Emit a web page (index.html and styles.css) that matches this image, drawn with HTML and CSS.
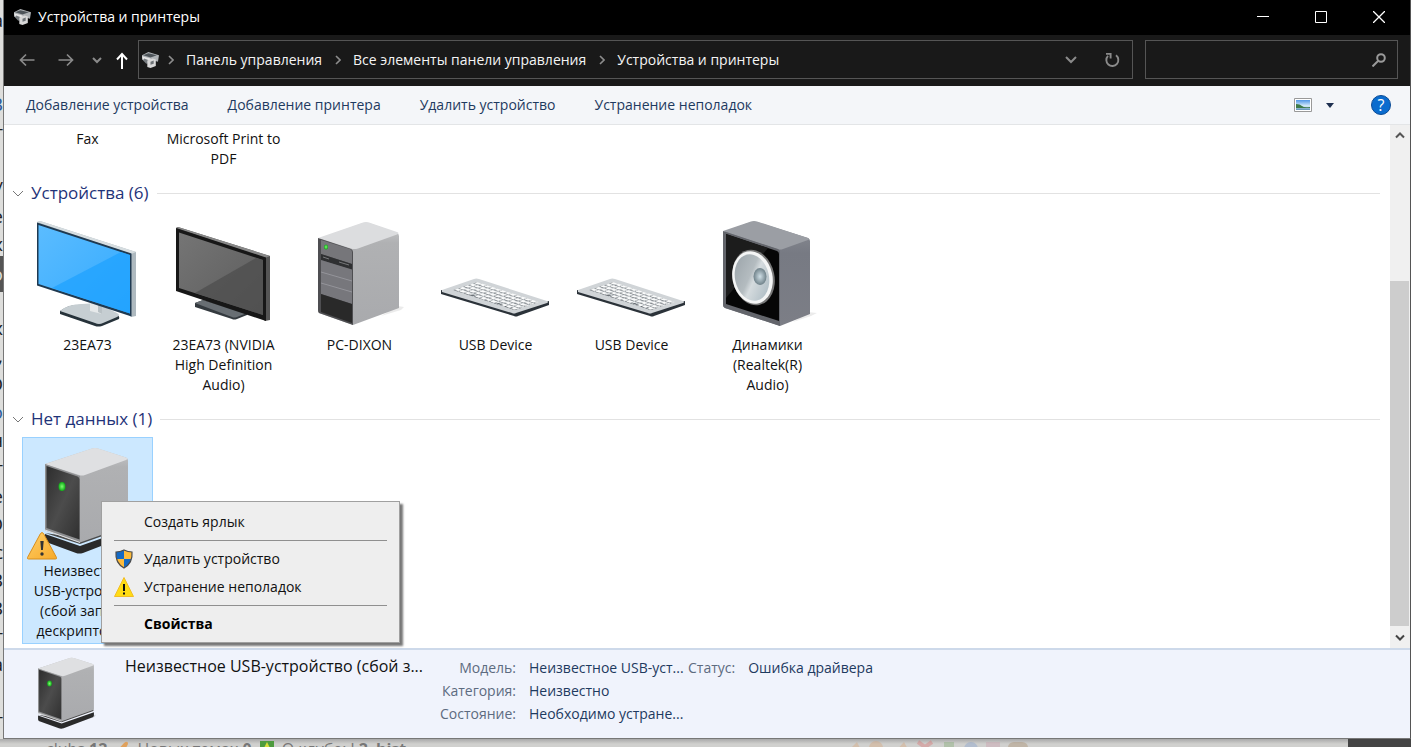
FILE: index.html
```html
<!DOCTYPE html>
<html lang="ru">
<head>
<meta charset="utf-8">
<title>Устройства и принтеры</title>
<link rel="stylesheet" href="styles.css">
</head>
<body>
<svg class="defs" aria-hidden="true">
  <defs>
    <linearGradient id="gBlue" x1="0" y1="0" x2="1" y2="1"><stop offset="0" stop-color="#5bbcff"/><stop offset="1" stop-color="#33aaff"/></linearGradient>
    <linearGradient id="gGrey" x1="0" y1="0" x2="1" y2="1"><stop offset="0" stop-color="#757575"/><stop offset="1" stop-color="#5c5c5c"/></linearGradient>
    <linearGradient id="gSide" x1="0" y1="0" x2="0" y2="1"><stop offset="0" stop-color="#c9cacc"/><stop offset=".2" stop-color="#b0b1b3"/><stop offset="1" stop-color="#a9aaad"/></linearGradient>
    <linearGradient id="gFront" x1="0" y1="0" x2="1" y2="1"><stop offset="0" stop-color="#2d2d2d"/><stop offset=".5" stop-color="#4c4c4c"/><stop offset="1" stop-color="#303030"/></linearGradient>
    <linearGradient id="gSpk" x1="0" y1="0" x2="0" y2="1"><stop offset="0" stop-color="#8b8e95"/><stop offset=".3" stop-color="#777a83"/><stop offset="1" stop-color="#7c7e86"/></linearGradient>
    <linearGradient id="gCone" x1="0" y1="0" x2="1" y2="1"><stop offset="0" stop-color="#98a1a7"/><stop offset=".45" stop-color="#b4bcc0"/><stop offset=".55" stop-color="#d5dbde"/><stop offset="1" stop-color="#a3b4bd"/></linearGradient>
    <radialGradient id="gCap"><stop offset="0" stop-color="#cfdfe6"/><stop offset="1" stop-color="#6f8189"/></radialGradient>
    <radialGradient id="gLed"><stop offset="0" stop-color="#7dff6e"/><stop offset="1" stop-color="#0fa918"/></radialGradient>
    <linearGradient id="gWarn" x1="0" y1="0" x2="1" y2="1"><stop offset="0" stop-color="#ffd06a"/><stop offset="1" stop-color="#f7a928"/></linearGradient>
    <linearGradient id="gPic" x1="0" y1="0" x2="0" y2="1"><stop offset="0" stop-color="#4f96e6"/><stop offset=".6" stop-color="#d7ecfa"/><stop offset="1" stop-color="#5b8fb5"/></linearGradient>
    <symbol id="box" viewBox="44 447 88 107">
      <path d="M120 534l11-1-2 3-20 7z" fill="#000" opacity=".12"/>
      <path d="M45 534l35 12 48-17v5l-1 2-44 17q-4 1-7 0l-30-11-1-2z" fill="#2a2a2a"/>
      <path d="M45 533l35 11 48-17-4-3-44 14z" fill="#4b4b4b"/>
      <path d="M45 464l47-15.500q3-1 6 0l28 9q2 1 2 3v65l-48 17-35-12z" fill="url(#gSide)"/>
      <path d="M45 464l47-15.500q3-1 6 0l28 9q3 1 0 2.500l-41 15q-3 1-6 0z" fill="#dfe0e2"/>
      <path d="M45 464l35 12v66l-35-12z" fill="#8e8f91"/>
      <path d="M46.500 466l31 10.500q2 1 2 3v60l-33-11.500z" fill="url(#gFront)"/>
      <path d="M45 530l35 12.500" stroke="#e1e1e1"/>
      <ellipse cx="62" cy="486.500" rx="3.500" ry="4.500" fill="url(#gLed)"/>
    </symbol>
    <symbol id="keyboard" viewBox="-1 -1 129 123">
      <path d="M104 93l10-3-6 5-6 1z" fill="#000" opacity=".08"/>
      <path d="M9 77v4l73 22q2 1 4 0l31-11v-4l-34 8z" fill="#2b3239"/>
      <path d="M10 77l32-11q2-1 5 0l68 22q2 1 0 2l-31 10q-2 1-4 0L10 79z" fill="#d0d4d7"/>
      <g transform="matrix(.74 .24 -.33 .11 43 66)" fill="none">
        <path d="M8 19H91M8 34H91M8 49H91M8 64H91M8 79H91" stroke="#6a7076" stroke-width="9" stroke-dasharray="5.500 1.300"/>
        <path d="M8 16H91M8 31H91M8 46H91M8 61H91M8 76H30M36 76H65M71 76H91" stroke="#fafbfb" stroke-width="10" stroke-dasharray="5.300 1.500"/>
      </g>
    </symbol>
    <symbol id="printer" viewBox="0 0 16 16">
      <path d="M0 4l6-3 10 3-1 6-4-1-7 1-4-2z" fill="#aeb2b5"/>
      <path d="M1 4l5-2 8 2-6 2z" fill="#4c5358"/>
      <path d="M0 5l8 2v3L1 8z" fill="#e6e6e6"/>
      <path d="M2 7l5 2 1 2-4 1-3-3z" fill="#777c80"/>
      <path d="M5 9l5-2 3 1v6l-5 2-3-1z" fill="#d8d8d8"/>
      <path d="M8 10l3-1v3l-3 1z" fill="#6d7276"/>
    </symbol>
  </defs>
</svg>

<div class="desk">
  <div class="desk-left" aria-hidden="true">
    <span>а</span><span></span><span></span><span class="blue">В</span><span>т</span><span></span><span>/</span><span>е</span><span>х</span><span class="mark">о</span><span></span><span>х</span><span>,</span><span>О</span><span class="blue">о</span><span>н</span><span>т</span><span>е</span><span>О</span><span>с</span><span>В</span><span>В</span><span>т</span><span>а</span><span></span><span>т</span>
  </div>

  <div class="window">
    <header class="titlebar">
      <svg class="app-icon"><use href="#printer"/></svg>
      <h1>Устройства и принтеры</h1>
      <div class="caption-buttons">
        <button aria-label="Свернуть"><svg width="12" height="12"><path d="M0 5.500h12" stroke="#fff"/></svg></button>
        <button aria-label="Развернуть"><svg width="12" height="12"><path d="M.5.500h11v11H.5z" stroke="#fff" fill="none"/></svg></button>
        <button aria-label="Закрыть"><svg width="12" height="12"><path d="M0 0l12 12M12 0L0 12" stroke="#fff" stroke-width="1.300"/></svg></button>
      </div>
    </header>

    <nav class="navbar" aria-label="Навигация">
      <div class="nav-buttons">
        <button aria-label="Назад"><svg width="16" height="14"><path d="M15.500 7H1.500M7 1.500L1.500 7 7 12.500" stroke="#8a8a8a" stroke-width="1.700" fill="none"/></svg></button>
        <button aria-label="Вперёд"><svg width="16" height="14"><path d="M.5 7h14M9 1.500L14.500 7 9 12.500" stroke="#8a8a8a" stroke-width="1.700" fill="none"/></svg></button>
        <button aria-label="Последние расположения"><svg width="10" height="14"><path d="M1 5l4 4 4-4" stroke="#8a8a8a" stroke-width="2" fill="none"/></svg></button>
        <button aria-label="Вверх"><svg width="12" height="18"><path d="M6 18V3M1 8.500L6 3l5 5.500" stroke="#fff" stroke-width="2" fill="none"/></svg></button>
      </div>
      <div class="address">
        <svg class="app-icon"><use href="#printer"/></svg>
        <svg class="sep" width="6" height="10"><path d="M1 1l4 4-4 4" stroke="#8c8c8c" stroke-width="1.600" fill="none"/></svg>
        <a href="#">Панель управления</a>
        <svg class="sep" width="6" height="10"><path d="M1 1l4 4-4 4" stroke="#8c8c8c" stroke-width="1.600" fill="none"/></svg>
        <a href="#">Все элементы панели управления</a>
        <svg class="sep" width="6" height="10"><path d="M1 1l4 4-4 4" stroke="#8c8c8c" stroke-width="1.600" fill="none"/></svg>
        <a href="#">Устройства и принтеры</a>
        <button class="history" aria-label="Предыдущие расположения"><svg width="12" height="8"><path d="M1 1l5 5 5-5" stroke="#8a8a8a" stroke-width="2" fill="none"/></svg></button>
        <button class="refresh" aria-label="Обновить"><svg width="16" height="16"><path d="M12 3.200A6 6 0 1 1 4 3.800M2 1.900h4.600v4.600" stroke="#8a8a8a" stroke-width="1.900" fill="none"/></svg></button>
      </div>
      <label class="search">
        <input type="text" aria-label="Поиск">
        <svg width="14" height="14"><circle cx="9" cy="5" r="3.800" stroke="#9a9a9a" stroke-width="2" fill="none"/><path d="M6 8L.5 13.500" stroke="#9a9a9a" stroke-width="2"/></svg>
      </label>
    </nav>

    <div class="toolbar">
      <button>Добавление устройства</button>
      <button>Добавление принтера</button>
      <button>Удалить устройство</button>
      <button>Устранение неполадок</button>
      <div class="tool-right">
        <button aria-label="Вид"><svg width="18" height="14"><path d="M.5.500h17v13H.5z" fill="#fff" stroke="#999"/><path d="M2 2h14v10H2z" fill="url(#gPic)"/><path d="M2 6q4 0 6 2t8 1v1H2z" fill="#3d7a48"/></svg></button>
        <button class="drop" aria-label="Другие варианты"><svg width="8" height="5"><path d="M0 0h8L4 5z" fill="#1e3050"/></svg></button>
        <button class="help" aria-label="Справка">?</button>
      </div>
    </div>

    <div class="viewport">
      <main class="list">
        <ul class="items">
          <li><span>Fax</span></li>
          <li><span>Microsoft Print to PDF</span></li>
        </ul>

        <h2><svg width="12" height="7"><path d="M1 1l5 5 5-5" stroke="#777" fill="none"/></svg>Устройства (6)</h2>
        <ul class="items">
          <li>
            <svg class="pic" viewBox="23 212 129 123">
              <path d="M60 311q8-6 17-6l20-1 20 11q3 1 2 4l-17 7q-4 1-7 0L60 314z" fill="#26323a"/>
              <path d="M60 311q8-7 22-7l15-1 20 10q4 2 0 4l-14 6q-4 2-8 0z" fill="#c6ced2"/>
              <path d="M90 302l12 4v8l-12-3z" fill="#e6e9ea"/><path d="M98 304l4 1v9l-4-2z" fill="#b9c1c5"/>
              <path d="M37 222l3-1 96 31v64l-5 1z" fill="#aeb9bf"/><path d="M37 222l3-1 96 31-5 2z" fill="#d6dde0"/>
              <path d="M37 222.500l94.500 31V316.500L37 285.500z" fill="#1f3950"/>
              <path d="M38.500 225l91.500 30v58.500L38.500 284z" fill="url(#gBlue)"/>
              <path d="M52 288l69-36 9 3v58.500z" fill="#1ca1ff" opacity=".7"/>
            </svg>
            <span>23EA73</span>
          </li>
          <li>
            <svg class="pic" viewBox="159 212 129 123">
              <path d="M195 303l8-3 44 13v2l-10 4q-3 1-5 0l-37-12z" fill="#343a3f"/><path d="M195 303l8-3 44 13-10 4q-3 1-5 0z" fill="#686e73"/>
              <path d="M176 228l2-1 92 29v64l-5 1z" fill="#555"/><path d="M176 228l2-1 92 29-5 2z" fill="#888"/>
              <path d="M176 228l90 29.500V321l-90-30z" fill="#171717"/>
              <path d="M179 232.500l84 27.500v55l-84-27z" fill="url(#gGrey)"/>
              <path d="M195 293l61-35 7 2v55z" fill="#4d4d4d" opacity=".75"/>
            </svg>
            <span>23EA73 (NVIDIA High Definition Audio)</span>
          </li>
          <li>
            <svg class="pic" viewBox="295 212 129 123">
              <path d="M398 306l6 1-3 3-20 6z" fill="#000" opacity=".08"/>
              <path d="M318 239l45-16q3-1 6 0l28 10q2 1 2 3v72l-46 17-34-12q-1-1-1-3z" fill="url(#gSide)"/>
              <path d="M318 238l45-15.500q3-1 6 0l28 9.500q3 1 0 2.500l-39 14q-4 1-7 0z" fill="#dcdddf"/>
              <path d="M318 238l33 11q2 1 2 3v73l-34-12q-1-1-1-3z" fill="#4e4e51"/>
              <path d="M321 240l29 9q2 1 2 3v12l-31-10z" fill="#76767a"/>
              <path d="M321 254l31 10v6l-31-10z" fill="#2f3032"/><path d="M323 257l6 2M339 262l10 3" stroke="#77787a"/>
              <path d="M321 260l31 9.500V304l-31-10z" fill="#77777c"/>
              <path d="M321 272l31 9M321 283l31 9" stroke="#94949a" fill="none"/>
              <path d="M321 294l31 10v19l-31-11z" fill="#292929"/>
              <ellipse cx="326" cy="247" rx="2" ry="2.500" fill="url(#gLed)"/>
            </svg>
            <span>PC-DIXON</span>
          </li>
          <li><svg class="pic"><use href="#keyboard"/></svg><span>USB Device</span></li>
          <li><svg class="pic"><use href="#keyboard"/></svg><span>USB Device</span></li>
          <li>
            <svg class="pic" viewBox="703 212 129 123">
              <path d="M808 312l9 1-6 3-18 6z" fill="#000" opacity=".08"/>
              <path d="M723 232l28-10q3-1 6 0l51 16q2 1 2 3v73l-30 12-55-18q-2-1-2-3z" fill="url(#gSpk)"/>
              <path d="M723 231l28-9.500q3-1 6 0l51 16.500q2 1 0 2l-25 9q-3 1-6 0z" fill="#9b9ea4"/>
              <path d="M723 231l55 18q2 1 2 3v74l-55-18q-2-1-2-3z" fill="#63656b"/>
              <path d="M726 234l51 17q2 1 2 3v67l-53-17z" fill="#060606"/>
              <path d="M726 234l42 14-42 50z" fill="#1c1c1c"/>
              <ellipse cx="753.500" cy="277.500" rx="21" ry="28" fill="#777" transform="rotate(-12 753.500 277.500)"/>
              <ellipse cx="752.500" cy="277.500" rx="20" ry="26.500" fill="#f4f5f5" transform="rotate(-12 752.500 277.500)"/>
              <ellipse cx="752" cy="277.500" rx="17" ry="23.500" fill="url(#gCone)" transform="rotate(-12 752 277.500)"/>
              <ellipse cx="760" cy="276.500" rx="6.500" ry="8.500" fill="url(#gCap)"/>
            </svg>
            <span>Динамики<br>(Realtek(R)<br>Audio)</span>
          </li>
        </ul>

        <h2><svg width="12" height="7"><path d="M1 1l5 5 5-5" stroke="#777" fill="none"/></svg>Нет данных (1)</h2>
        <ul class="items">
          <li class="selected">
            <svg class="pic" viewBox="23 438 129 123">
              <use href="#box" x="44" y="447" width="88" height="107"/>
              <path d="M40.500 533.500q1.500-2 3 0l13 24q.5 1.500-1 1.500h-27q-1.500 0-1-1.500z" fill="url(#gWarn)" stroke="#d98e1c"/>
              <path d="M40.300 541h3.400l-.8 9h-1.800z" fill="#333"/><circle cx="42" cy="554" r="1.700" fill="#333"/>
            </svg>
            <span>Неизвестное USB-устройство (сбой запроса дескриптора ...</span>
          </li>
        </ul>
      </main>
      <div class="scroll" aria-hidden="true">
        <svg width="10" height="8"><path d="M1 6.500l4-4 4 4" stroke="#555" stroke-width="2" fill="none"/></svg>
        <div class="track"><div class="thumb"></div></div>
        <svg width="10" height="8"><path d="M1 1.500l4 4 4-4" stroke="#444" stroke-width="2" fill="none"/></svg>
      </div>

      <div class="menu" role="menu">
        <button role="menuitem">Создать ярлык</button>
        <hr>
        <button role="menuitem"><svg width="20" height="20"><path d="M10 1q4 2 8 2 1 11-8 16-9-5-8-16 4 0 8-2z" fill="#1469c4"/><path d="M10 1q4 2 8 2v7h-8zM10 10v9q-7-4-8-9z" fill="#fdbb3b"/><path d="M10 1q4 2 8 2 1 11-8 16-9-5-8-16 4 0 8-2z" fill="none" stroke="#4b4b4b" stroke-width="1.200"/></svg>Удалить устройство</button>
        <button role="menuitem"><svg width="20" height="20"><path d="M10 .5l9.500 19H.5z" fill="#ffdc14" stroke="#f2bd24" stroke-linejoin="round"/><path d="M10 7v7M10 15.500v2" stroke="#111" stroke-width="2"/></svg>Устранение неполадок</button>
        <hr>
        <button role="menuitem" class="strong">Свойства</button>
      </div>
    </div>

    <footer class="details">
      <svg class="thumbnail"><use href="#box"/></svg>
      <h3>Неизвестное USB-устройство (сбой з...</h3>
      <dl>
        <dt>Модель:</dt><dd>Неизвестное USB-уст...</dd>
        <dt>Категория:</dt><dd>Неизвестно</dd>
        <dt>Состояние:</dt><dd>Необходимо устране...</dd>
      </dl>
      <dl>
        <dt>Статус:</dt><dd>Ошибка драйвера</dd>
      </dl>
    </footer>
  </div>

  <div class="desk-bottom" aria-hidden="true">
    <span>clubs <b>12</b></span>
    <svg width="14" height="14"><path d="M0 12L9 2q4-3 4 1L8 13z" fill="#e0a15c"/></svg>
    <span>Новых темах <b>0</b></span>
    <svg width="14" height="14"><path d="M0 0h14v14H0z" fill="#4e9b3e"/><path d="M7 1l3 6H4z" fill="#d9dd3c"/></svg>
    <span>О клубе: l <b>2</b></span>
    <b>hist</b>
    <svg class="badges" width="180" height="14" opacity=".35"><path d="M0 12L9 3l4 8z" fill="#d9a070"/><circle cx="28" cy="9" r="7" fill="#d9a070"/><path d="M46 14L56 3l6 11z" fill="#d9a070"/><path d="M70 3l14 10M84 3L70 13" stroke="#d66" stroke-width="4"/><path d="M96 3h10v11H96z" fill="#7aa86a"/><circle cx="123" cy="10" r="7" fill="#7d9cd0"/><path d="M138 3h14v11h-14z" fill="#c9a"/><rect x="160" y="3" width="20" height="11" rx="6" fill="#a58560"/></svg>
    <i></i>
  </div>
</div>
</body>
</html>
```
FILE: styles.css
```css
* { box-sizing: border-box; }
body, h1, h2, h3, ul, dl, dd { margin: 0; padding: 0; font-weight: 400; }
body { font: 14px/20px "Open Sans", "Noto Sans", sans-serif; color: #111; }
button { border: 0; padding: 0; background: none; font: inherit; color: inherit; display: flex; align-items: center; justify-content: center; }
a { color: inherit; text-decoration: none; }
svg { display: block; flex: none; }
.defs { position: absolute; width: 0; height: 0; }

.desk { display: grid; grid-template: minmax(0, 1fr) 8px / 4px minmax(0, 1fr); height: 100vh; overflow: hidden; background: #d2d2d0; }
.desk-left { display: flex; flex-direction: column; align-items: flex-end; overflow: hidden; padding-top: 6px; border-right: 1px solid #777; font-size: 19px; background: #dededc; color: #222; }
.desk-left span { flex: none; height: 28px; line-height: 28px; }
.desk-left .blue { color: #2b5c9e; }
.desk-left .mark { height: 36px; margin: -2px 0 -6px; padding-left: 4px; background: #555; color: #ddd; line-height: 36px; }
.desk-bottom { grid-column: 1 / -1; display: flex; align-items: flex-start; gap: 8px; overflow: hidden; padding-left: 46px; color: #777; background: linear-gradient(#a9a9a9, #d0d0ce 5px); font-size: 16px; }
.desk-bottom svg { margin-top: 2px; }
.desk-bottom .badges { margin: 0 0 0 auto; }
.desk-bottom i { width: 63px; height: 8px; margin-left: 312px; background: #444; }

.window { display: flex; flex-direction: column; min-width: 0; min-height: 0; background: #fff; border-right: 1px solid #555; border-bottom: 1px solid #777; }

.titlebar { display: flex; align-items: center; flex: none; height: 35px; padding: 0 2px 2px 10px; background: #000; color: #fff; }
.app-icon { width: 17px; height: 17px; }
.titlebar h1 { margin-left: 7px; font-size: 14px; }
.caption-buttons { display: flex; margin-left: auto; }
.caption-buttons button { width: 58px; height: 32px; }

.navbar { display: flex; align-items: center; flex: none; height: 51px; padding: 0 12px 2px 15px; background: #191919; color: #f4f4f4; }
.nav-buttons { display: flex; align-items: center; gap: 18px; width: 119px; flex: none; }
.nav-buttons button:nth-child(2) { margin-left: 5px; }
.nav-buttons button:nth-child(4) { margin-left: -4px; }
.address { display: flex; align-items: center; flex: 1; min-width: 0; height: 39px; padding-left: 3px; border: 1px solid #555; }
.address a { margin: 0 11px 0 12px; white-space: nowrap; }
.address .sep { margin-left: 2px; }
.address .sep:nth-child(2) { margin-left: 9px; }
.history { width: 40px; height: 37px; margin-left: auto; }
.refresh { width: 41px; height: 37px; }
.search { display: flex; align-items: center; width: 253px; height: 39px; margin-left: 12px; padding-right: 11px; border: 1px solid #555; }
.search input { flex: 1; min-width: 0; height: 30px; padding: 0 8px; border: 0; outline: 0; background: none; color: #fff; font: inherit; }

.toolbar { display: flex; align-items: center; gap: 39px; flex: none; height: 39px; padding: 0 19px 0 22px; background: #f4f6f9; border-bottom: 1px solid #e3e5e7; color: #1e3a5f; }
.tool-right { display: flex; align-items: center; margin-left: auto; }
.drop { width: 35px; height: 24px; }
.help { width: 20px; height: 20px; margin-left: 24px; border: 1px solid #0a4b96; border-radius: 50%; background: #0a6cce; color: #fff; font-size: 16px; }

.viewport { position: relative; display: flex; flex: 1; min-height: 0; }
.list { flex: 1; min-width: 0; overflow: hidden; padding: 3px 10px 0; }
.items { display: flex; gap: 5px; padding-left: 8px; list-style: none; }
.items li { width: 131px; padding-bottom: 2px; border: 1px solid transparent; text-align: center; }
.items li span { display: block; padding: 0 6px; }
.items .selected { background: #cce8ff; border-color: #99d1ff; }
.pic { width: 129px; height: 123px; }
.list h2 { display: flex; align-items: center; height: 36px; margin-top: 3px; font-size: 17px; color: #1f3379; }
.list h2 svg { margin: 0 7px 0 -2px; }
.list h2::after { content: ""; flex: 1; height: 1px; margin-left: 8px; background: #e2e2e2; }

.scroll { display: flex; flex-direction: column; align-items: center; width: 20px; padding: 6px 0; background: #f0f0f0; }
.track { display: flex; align-items: flex-end; flex: 1; width: 20px; padding: 0 1px 0 0; margin: 8px 0; }
.thumb { width: 19px; height: 72%; background: #cdcdcd; }

.menu { position: absolute; left: 97px; top: 376px; width: 299px; padding: 6px 12px 4px; border: 1px solid #a0a0a0; background: #eee; box-shadow: 3px 3px 2px #777; }
.menu button { width: 100%; height: 28px; justify-content: flex-start; padding-left: 30px; }
.menu button:has(svg) { padding-left: 0; gap: 10px; }
.menu hr { height: 1px; margin: 4px 0; border: 0; background: #8f8f8f; }
.menu .strong { font-weight: 700; color: #000; }

.details { display: flex; align-items: flex-start; flex: none; height: 90px; padding: 6px 16px 0 33px; border-top: 2px solid #cdd9ea; background: #f0f3fc; }
.thumbnail { width: 60px; height: 72px; margin-top: 1px; }
.details h3 { width: 305px; margin-left: 28px; font-size: 16px; line-height: 20px; white-space: nowrap; }
.details dl { display: grid; grid-template-columns: auto auto; column-gap: 13px; line-height: 23px; white-space: nowrap; }
.details dl:first-of-type { width: 258px; grid-template-columns: 86px 159px; }
.details dt { text-align: right; color: #5d6b80; }
.details dd { color: #1e3a5f; }
```
